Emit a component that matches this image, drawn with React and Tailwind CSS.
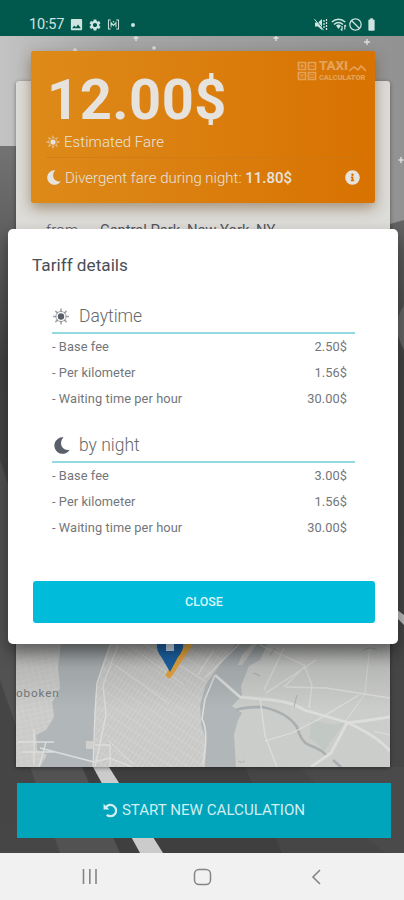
import React from 'react';
import { FaInfoCircle } from 'react-icons/fa';
import { MdImage, MdSettings, MdBlock, MdBatteryFull } from 'react-icons/md';

const tariffs = [
  {
    title: 'Daytime',
    icon: 'sun',
    rows: [
      { label: '- Base fee', price: '2.50$' },
      { label: '- Per kilometer', price: '1.56$' },
      { label: '- Waiting time per hour', price: '30.00$' },
    ],
  },
  {
    title: 'by night',
    icon: 'moon',
    rows: [
      { label: '- Base fee', price: '3.00$' },
      { label: '- Per kilometer', price: '1.56$' },
      { label: '- Waiting time per hour', price: '30.00$' },
    ],
  },
];

const SunIcon = ({ className }) => (
  <svg className={className} viewBox="0 0 16 16" fill="none" stroke="currentColor">
    <circle cx="8" cy="8" r="3" fill="currentColor" stroke="none" />
    <circle cx="8" cy="8" r="4.8" strokeWidth="1" opacity="0.45" />
    <path
      d="M8 .5v3M8 12.500v3M.5 8h3M12.500 8h3M2.700 2.700l2.100 2.100M11.200 11.200l2.100 2.100M2.700 13.300l2.100-2.100M11.200 4.800l2.100-2.100"
      strokeWidth="1.500"
      opacity="0.55"
    />
  </svg>
);

const MoonIcon = ({ className }) => (
  <svg className={className} viewBox="0 0 16 16" fill="currentColor">
    <path d="M10 .3A7.800 7.800 0 1 0 15.800 12C11.300 13 7.600 10.100 7.600 5.900 7.600 3.500 8.500 1.600 10 .3z" />
  </svg>
);

const UndoIcon = ({ className }) => (
  <svg className={className} viewBox="0 0 16 16" fill="none">
    <path d="M.6.800v6.200h6.200z" fill="currentColor" />
    <path d="M3.300 4.300A6 6 0 1 1 4 12.600" stroke="currentColor" strokeWidth="2.400" />
  </svg>
);

const StatusBar = () => (
  <header className="flex h-9 shrink-0 items-start justify-between bg-[#00594c] pl-[29px] pr-[25px] pt-[15px] text-[#cfe3e0]">
    <div className="flex h-[19px] items-center">
      <span className="w-[36px] text-[14.5px] tracking-[-0.2px]">10:57</span>
      <MdImage className="ml-[4px] h-[15px] w-[15px]" />
      <MdSettings className="ml-[4px] h-[14px] w-[14px]" />
      <svg className="ml-[5px] h-[11px] w-[13px]" viewBox="0 0 13 12" fill="none" stroke="currentColor" strokeWidth="1.100">
        <path d="M3.500 1H1v10h2.500M9.500 1H12v10H9.500M3.800 9V4l2.700 3 2.700-3v5" />
        <circle cx="6.500" cy="3" r=".9" fill="currentColor" stroke="none" />
      </svg>
      <span className="ml-[11px] h-1 w-1 rounded-full bg-[#cfe3e0]" />
    </div>
    <div className="flex h-[19px] items-center">
      <svg className="h-[13px] w-[14px]" viewBox="0 0 14 13">
        <path d="M1 4.500h3L8 1v11L4 8.500H1z" fill="currentColor" />
        <path d="M1.500 1l8 10.500" stroke="#00594c" strokeWidth="1" />
        <path d="M.5 1.200l9 11" stroke="currentColor" strokeWidth="1" />
        <path d="M10 2v9M12.500 1v11" stroke="currentColor" strokeWidth="1.300" strokeDasharray="2 1" />
      </svg>
      <svg className="ml-[3px] h-[13px] w-[16px]" viewBox="0 0 16 13" fill="none" stroke="currentColor">
        <path d="M.8 4c4-3.700 9.400-3.700 13.400 0M3 6.500c2.700-2.500 6.300-2.500 9 0" strokeWidth="1.400" />
        <path d="M5 7.500c1.500-1.200 3.500-1.200 5 0L7.500 11z" fill="currentColor" stroke="none" />
        <path d="M11 8v4.500M9.800 11.200l1.200 1.300M13.800 11.500V7M15 8.300L13.800 7" strokeWidth="1.200" />
      </svg>
      <MdBlock className="ml-[1px] h-[15px] w-[15px] rotate-90" />
      <MdBatteryFull className="ml-[1px] h-[15px] w-[15px]" />
    </div>
  </header>
);

const RoadBackdrop = () => (
  <svg className="absolute inset-0 h-full w-full" viewBox="0 36 404 817" preserveAspectRatio="none">
    <defs>
      <linearGradient id="sky" x1="0" y1="0" x2="1" y2="0">
        <stop offset="0" stopColor="#c3c3c3" />
        <stop offset=".3" stopColor="#a6a6a6" />
        <stop offset="1" stopColor="#929292" />
      </linearGradient>
      <linearGradient id="road" x1="0" y1="0" x2="0" y2="1">
        <stop offset="0" stopColor="#737373" />
        <stop offset=".3" stopColor="#434343" />
        <stop offset="1" stopColor="#464646" />
      </linearGradient>
    </defs>
    <path d="M0 36h404v817H0z" fill="url(#sky)" />
    <path d="M0 146h30l360 78 14-4v633H0z" fill="url(#road)" />
    <path d="M0 460l130 393H60L0 680z" fill="#525252" />
    <path d="M82 767l38 86h162L245 767z" fill="#3f3f3f" />
    <path d="M300 767h104v86h-18l-20-15z" fill="#4a4a4a" />
    <path d="M404 305q-14 20 0 45z" fill="#656565" />
    <path d="M396 609l8 6v10l-8-8z" fill="#bbb" />
    <path d="M93 767h16l54 86h-23z" fill="#cbcbcb" />
    <g stroke="#dedede" strokeWidth="1.400">
      <path d="M136 36v5M133.500 38h5M75 48v4M73 50h4M154 46v4M152 48h4M276 36v5M273.500 38h5M367 39v6M364 42h6M401 157v6M398.500 160h5" />
    </g>
  </svg>
);

const CityMap = () => (
  <svg className="h-[187px] w-full shrink-0" viewBox="16 580 374 187" preserveAspectRatio="none">
    <defs>
      <pattern id="streets" width="4" height="9" patternUnits="userSpaceOnUse" patternTransform="rotate(33)">
        <path d="M0 0v9M0 0h4" stroke="#d8d8d6" strokeWidth="1" />
      </pattern>
      <pattern id="blocks" width="6" height="5" patternUnits="userSpaceOnUse" patternTransform="rotate(-12)">
        <path d="M0 0v5M0 0h6" stroke="#d6d6d4" strokeWidth=".9" />
      </pattern>
      <linearGradient id="mapShade" x1="0" y1="640" x2="0" y2="710" gradientUnits="userSpaceOnUse">
        <stop offset="0" stopColor="#000" stopOpacity=".28" />
        <stop offset=".4" stopColor="#000" stopOpacity=".1" />
        <stop offset="1" stopColor="#000" stopOpacity="0" />
      </linearGradient>
    </defs>
    <path d="M16 580h374v187H16z" fill="#b1b7b9" />
    <path d="M16 580h41l4 63-3 25 2 20-8 15 2 14-8 13-10 5 1 15 10 5-9 15H16z" fill="#cbccca" />
    <path d="M16 580h41l4 63-3 25 2 20-8 15 2 14-8 13-10 5 1 15 10 5-9 15H16z" fill="url(#blocks)" />
    <path d="M110 643l-7 20-7 25-1 25-1 54h111l1-27-5-15-1-20 6-21 30-41z" fill="#c9cac8" />
    <path d="M110 643l-7 20-7 25-1 25-1 54h111l1-27-5-15-1-20 6-21 30-41z" fill="url(#streets)" />
    <path d="M253 643h137v124H236l-2-32 4-15 4-7-10-7 10-10-1-10 8-20 11-6 8-17z" fill="#cbcdca" />
    <path d="M253 643h137v124H236l-2-32 4-15 4-7-10-7 10-10-1-10 8-20 11-6 8-17z" fill="url(#blocks)" opacity=".25" />
    <path d="M238 665l4-10 14-15h4l-18 25z" fill="#cbccca" />
    <path d="M86 741h7v8h-7z" fill="#d0d1cf" />
    <path d="M311 720l24 5 10-3-21 29q-10-12-15-12z" fill="#c2c8c3" />
    <path
      d="M236 710q8-3 26-3 25 5 35 20 4 15 12 18 16 6 18 12M333 760l8 7"
      fill="none"
      stroke="#aaafb1"
      strokeWidth="2.800"
    />
    <g fill="none" stroke="#dddedc" strokeLinejoin="round">
      <path d="M110 645l-13 38-2 29-2 55M118 645l-15 40 3 30-11 52M95 745h15v22" strokeWidth="1.300" />
      <path d="M18 742h36M22 752h32M34 730v34M46 742l-7 25M40 748l54 14 16-4 34 14" strokeWidth="1.300" />
      <path d="M215 675l25 22 21 2q31 2 43 11l42 12q30 13 44 29M346 723q20-2 44-6M347 723l-16 30-20 14" strokeWidth="2.800" />
      <path d="M260 698l5 38 12 31M265 741l27-8 27-14 40-24M286 687l40 1 64 10M260 645l44 20 8 20-3 23M264 690l20-42M266 693l50-33M284 687l20-20M198 675l16-25M205 678l35-35" strokeWidth="1.300" />
      <path d="M215 675l-10 24-3 20q7 12 1 45" strokeWidth="1.600" />
      <path d="M127 644l57 41M115 665l54 39M142 643l63 38M108 740l25 24M370 644l-5 50-20 28M390 735l-16-4" strokeWidth="1" />
    </g>
    <g fill="none" stroke="#acb0ae" strokeWidth="1">
      <path d="M253 673q4 1 7 3M238 761q3 3 7 0M297 695l-3 12M363 650q8-4 14 0M270 655l5-7" />
    </g>
    <path d="M16 580h374v187H16z" fill="url(#mapShade)" />
    <path d="M189 645l-20 30" stroke="#d69a3c" strokeWidth="6" strokeLinecap="round" />
    <path d="M157 643q-1 8 5 15l8 14 8-15q6-7 5-14z" fill="#1b5c99" />
    <path d="M166 643h8v8h-8z" fill="#bfd0df" />
    <text x="16" y="697" fontSize="11.800" fill="#70757a" letterSpacing=".8">oboken</text>
  </svg>
);

const Logo = () => (
  <div className="flex h-[20px] w-[70px] items-center gap-[2px] text-[#e3a258]">
    <svg className="h-[20px] w-[20px] shrink-0" viewBox="0 0 20 20" fill="none" stroke="currentColor" strokeWidth="1.700">
      <path d="M1.500 1.500h7v7h-7zM11.500 1.500h7v7h-7zM1.500 11.500h7v7h-7zM11.500 11.500h7v7h-7z" />
      <path d="M3 5h4M5 3v4M13 5h4M3.500 13.500l3 3M6.500 13.500l-3 3M13 14h4M13 16.500h4" strokeWidth="1.100" />
    </svg>
    <div className="w-[48px]">
      <div className="flex h-[12px] items-end">
        <span className="w-[30px] text-[13.500px] font-black leading-[13px] tracking-[-0.200px]">TAXI</span>
        <svg className="h-[8px] w-[17px] shrink-0" viewBox="0 0 17 8" fill="none" stroke="currentColor" strokeWidth="1.600">
          <path d="M0 7l5-4 4 3 3-4 5 5" />
        </svg>
      </div>
      <div className="pt-[2px] text-[7.500px] font-black leading-[8px] tracking-[-0.1px]">CALCULATOR</div>
    </div>
  </div>
);

const FareCard = () => (
  <section className="relative mx-[15px] -mt-[30px] h-[152px] shrink-0 rounded-[2px] bg-linear-to-r from-[#dd8a19] to-[#d87200] px-[15px] text-[#e6e3df] shadow-[0_5px_14px_rgba(90,50,0,0.45)]">
    <div className="flex h-[82px] justify-between">
      <h1 className="pl-px pt-[21px] text-[56px] font-bold leading-[56px] tracking-[0.500px]">12.00$</h1>
      <div className="-mr-[7px] pt-[10px]">
        <Logo />
      </div>
    </div>
    <div className="flex h-[25px] items-start gap-[4px] border-b border-[#c87a1a]/60">
      <SunIcon className="mt-[2px] h-[14px] w-[14px]" />
      <span className="text-[15px] leading-[18px] font-light tracking-[0.060px]">Estimated Fare</span>
    </div>
    <div className="flex h-[39px] items-center">
      <MoonIcon className="mr-[4px] h-[15px] w-[15px]" />
      <span className="text-[15px] font-light leading-[20px]">
        Divergent fare during night: <b className="font-medium">11.80$</b>
      </span>
      <FaInfoCircle className="ml-auto h-[15px] w-[15px]" />
    </div>
  </section>
);

const TariffDialog = () => (
  <div
    role="dialog"
    className="absolute left-[8px] top-[193px] flex h-[415px] w-[390px] flex-col rounded-[5px] bg-white px-[24px] pb-[21px] shadow-[0_8px_16px_rgba(0,0,0,0.4)]"
  >
    <h2 className="pt-[24px] text-[17.200px] leading-[24px] text-[#4a4e55]">Tariff details</h2>
    <div className="pl-[20px] pr-[19px] pt-[20px]">
      {tariffs.map((tariff) => (
        <div key={tariff.title} className="h-[129px]">
          <h3 className="flex h-[37px] items-center border-b-2 border-[#94d9df] pt-[3px] text-[17.500px] font-light text-[#65686d]">
            <span className="w-[27px] text-[#59606a]">
              {tariff.icon === 'sun' ? (
                <SunIcon className="h-[17px] w-[18px]" />
              ) : (
                <MoonIcon className="ml-[1px] h-[17px] w-[17px]" />
              )}
            </span>
            {tariff.title}
          </h3>
          {tariff.rows.map((row) => (
            <div
              key={row.label}
              className="flex h-[26px] items-center justify-between pr-[8px] text-[12.800px] tracking-[0.080px] text-[#73767a]"
            >
              <span>{row.label}</span>
              <span>{row.price}</span>
            </div>
          ))}
        </div>
      ))}
    </div>
    <button className="ml-px mr-[-1px] mt-auto h-[42px] shrink-0 rounded-[3px] bg-[#00bbda] text-[12.500px] font-medium text-[#dcf6fb]">
      CLOSE
    </button>
  </div>
);

const NavigationBar = () => (
  <footer className="flex h-[47px] shrink-0 items-center bg-[#f1f1f1] pl-[82px] text-[#858585]">
    <svg className="h-[16px] w-[16px]" viewBox="0 0 16 16" stroke="currentColor" strokeWidth="1.600">
      <path d="M1.500 0v15M7.800 0v15M14 0v15" />
    </svg>
    <svg className="ml-[95px] h-[18px] w-[19px]" viewBox="0 0 19 18" fill="none" stroke="currentColor" strokeWidth="1.500">
      <rect x="1.500" y="1.500" width="16" height="15" rx="4.500" />
    </svg>
    <svg className="ml-[99px] h-[16px] w-[11px]" viewBox="0 0 11 16" fill="none" stroke="currentColor" strokeWidth="1.600">
      <path d="M9 1L2 8l7 7" />
    </svg>
  </footer>
);

const App = () => {
  return (
    <div className="flex h-[900px] w-[404px] flex-col overflow-hidden bg-[#444] font-[Roboto,sans-serif]">
      <StatusBar />
      <main className="relative flex h-[817px] shrink-0 flex-col overflow-hidden pl-[16px] pr-[14px] pt-[45px]">
        <RoadBackdrop />
        <div className="relative flex h-[686px] shrink-0 flex-col rounded-[3px] bg-[#dddcd9] shadow-[0_1px_4px_rgba(0,0,0,0.4)]">
          <FareCard />
          <div className="flex pl-[30px] pt-[17px] text-[14.800px] leading-[20px] text-[#55565a]">
            <span className="w-[54px] font-light tracking-[0.3px]">from</span>
            <span>Central Park, New York, NY</span>
          </div>
          <div className="mt-auto flex">
            <CityMap />
          </div>
        </div>
        <button className="relative -mr-px ml-px mt-[16px] flex h-[55px] shrink-0 items-center justify-center gap-[4px] bg-[#00a4bb] text-[15.100px] text-[#d2eef2]">
          <UndoIcon className="h-[15px] w-[15px]" />
          START NEW CALCULATION
        </button>
        <TariffDialog />
      </main>
      <NavigationBar />
    </div>
  );
};

export default App;
